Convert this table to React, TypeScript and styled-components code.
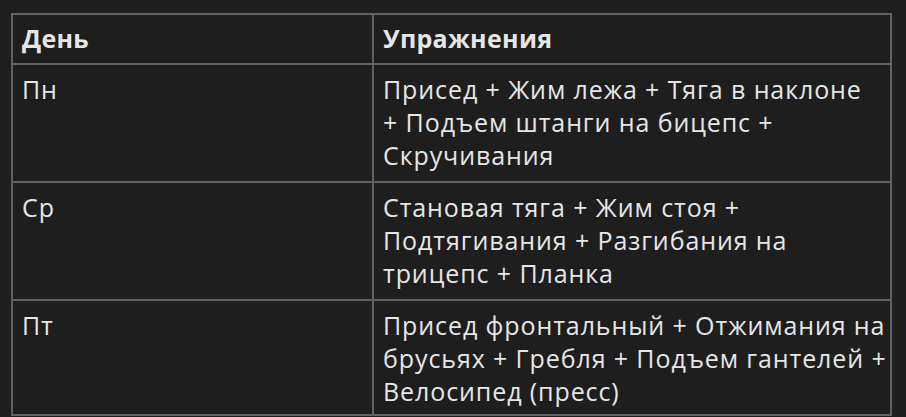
import styled, { createGlobalStyle } from "styled-components";

const GlobalStyle = createGlobalStyle`
  html, body {
    margin: 0;
    padding: 0;
    background: #1e1e1e;
  }
  body {
    font-family: "Open Sans", "Noto Sans", sans-serif;
    color: #e6e6e6;
  }
`;

const Page = styled.div`
  padding: 13px 14px 0 11px;
`;

const Table = styled.table`
  width: 881px;
  border-collapse: collapse;
  table-layout: fixed;
  font-size: 25px;
  line-height: 33px;
  letter-spacing: 0.9px;
`;

const HeadCell = styled.th<{ $width?: number }>`
  width: ${(props) => (props.$width ? `${props.$width}px` : "auto")};
  border: 2px solid #616161;
  padding: 7px 8px 8px 9px;
  text-align: left;
  font-weight: 700;
  letter-spacing: 0.3px;
  vertical-align: top;
`;

const Row = styled.tr`
  &:last-child td {
    padding-bottom: 6px;
  }
`;

const Cell = styled.td`
  border: 2px solid #616161;
  padding: 8px 8px 9px 9px;
  vertical-align: top;
  white-space: nowrap;
`;

interface IDay {
  day: string;
  lines: string[];
}

const days: IDay[] = [
  {
    day: "Пн",
    lines: [
      "Присед + Жим лежа + Тяга в наклоне",
      "+ Подъем штанги на бицепс +",
      "Скручивания",
    ],
  },
  {
    day: "Ср",
    lines: [
      "Становая тяга + Жим стоя +",
      "Подтягивания + Разгибания на",
      "трицепс + Планка",
    ],
  },
  {
    day: "Пт",
    lines: [
      "Присед фронтальный + Отжимания на",
      "брусьях + Гребля + Подъем гантелей +",
      "Велосипед (пресс)",
    ],
  },
];

function App() {
  return (
    <Page>
      <GlobalStyle />
      <Table>
        <thead>
          <tr>
            <HeadCell $width={342}>День</HeadCell>
            <HeadCell>Упражнения</HeadCell>
          </tr>
        </thead>
        <tbody>
          {days.map((d) => (
            <Row key={d.day}>
              <Cell>{d.day}</Cell>
              <Cell>
                {d.lines.map((line, i) => (
                  <span key={i}>
                    {line}
                    {i < d.lines.length - 1 && <br />}
                  </span>
                ))}
              </Cell>
            </Row>
          ))}
        </tbody>
      </Table>
    </Page>
  );
}

export default App;
